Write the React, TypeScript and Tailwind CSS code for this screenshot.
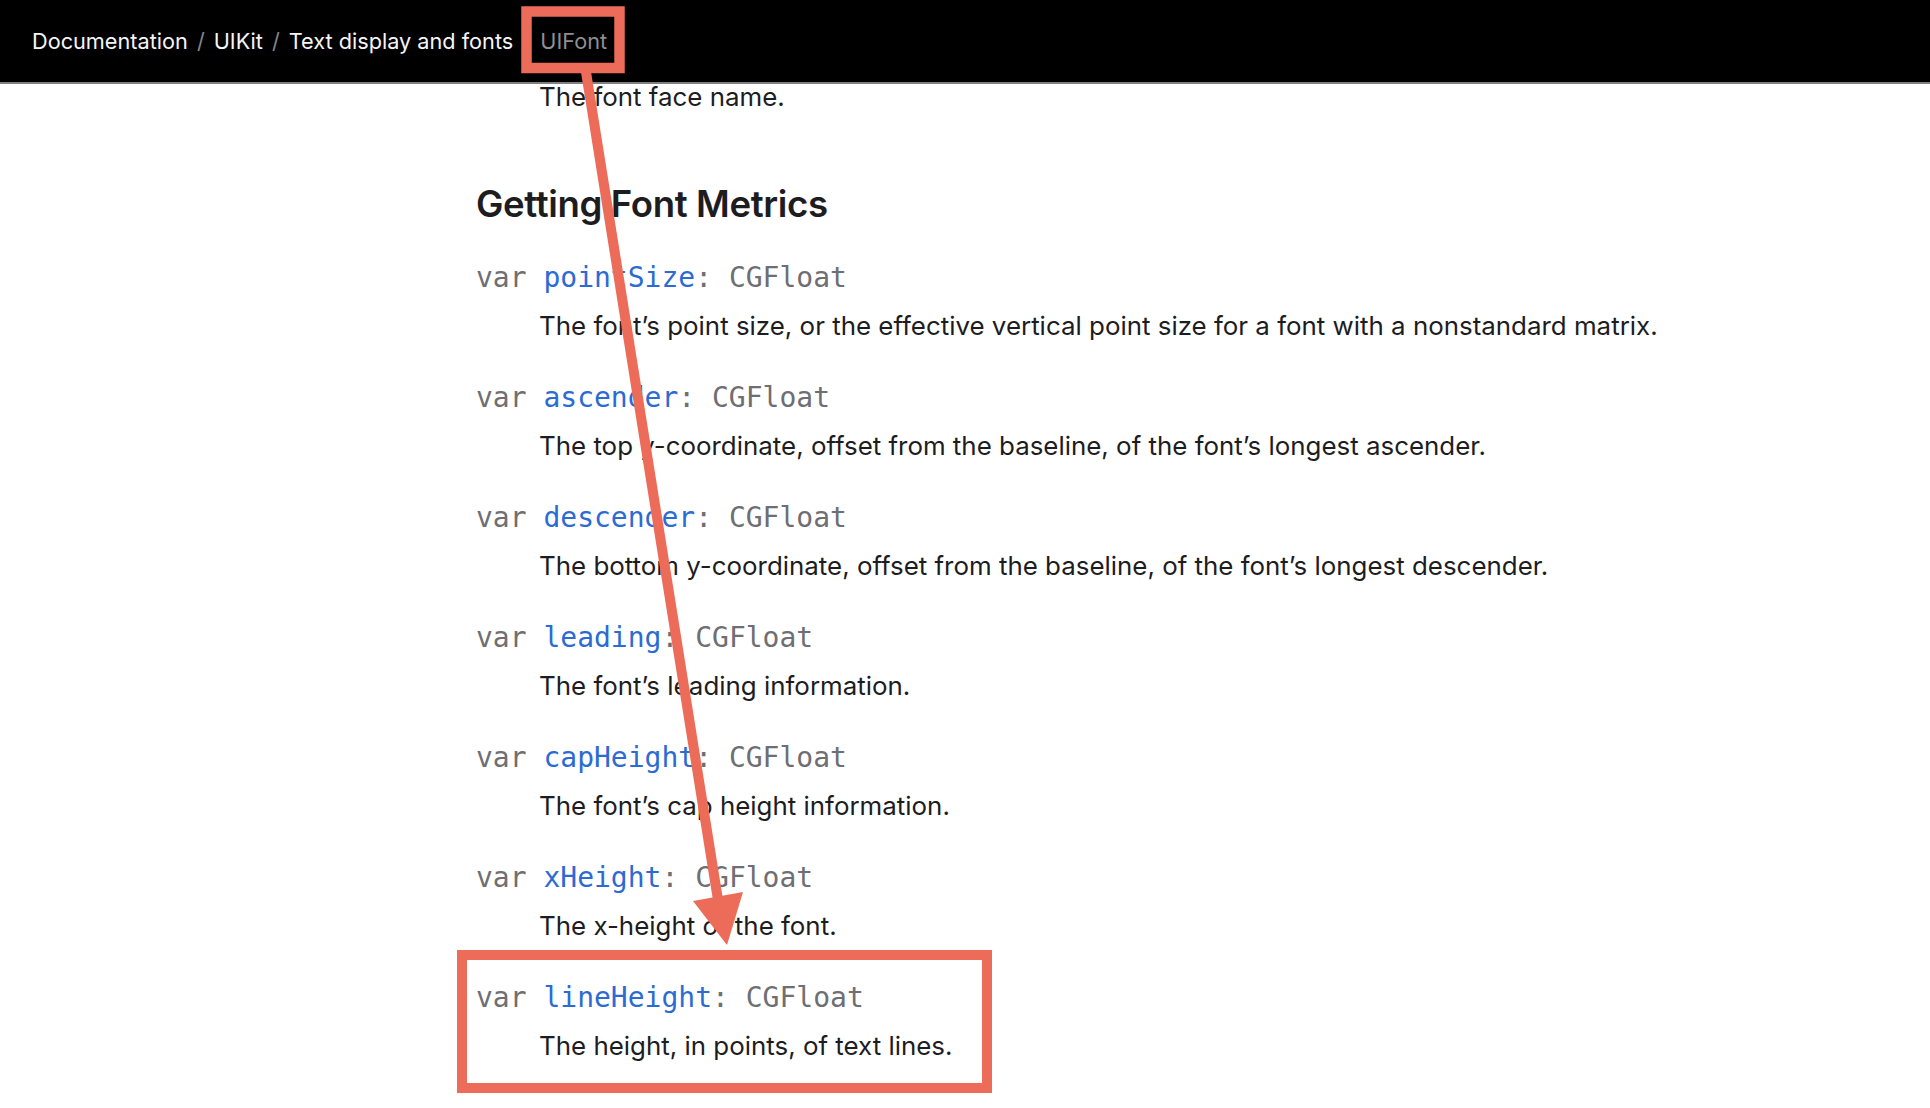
type Metric = {
  name: string;
  type: string;
  summary: string;
};

const metrics: Metric[] = [
  {
    name: "pointSize",
    type: "CGFloat",
    summary:
      "The font’s point size, or the effective vertical point size for a font with a nonstandard matrix.",
  },
  {
    name: "ascender",
    type: "CGFloat",
    summary:
      "The top y-coordinate, offset from the baseline, of the font’s longest ascender.",
  },
  {
    name: "descender",
    type: "CGFloat",
    summary:
      "The bottom y-coordinate, offset from the baseline, of the font’s longest descender.",
  },
  { name: "leading", type: "CGFloat", summary: "The font’s leading information." },
  { name: "capHeight", type: "CGFloat", summary: "The font’s cap height information." },
  { name: "xHeight", type: "CGFloat", summary: "The x-height of the font." },
  { name: "lineHeight", type: "CGFloat", summary: "The height, in points, of text lines." },
];

const crumbs = ["Documentation", "UIKit", "Text display and fonts"];

function Breadcrumbs(): JSX.Element {
  return (
    <nav className="h-[84px] bg-black border-b-2 border-[#808080] flex items-center pl-[32px] pt-[1px] font-['Inter',sans-serif] text-[21.7px]">
      {crumbs.map((c, i) => (
        <span key={c} className="inline-flex items-center">
          {i > 0 && <span className="text-[#86868b] mx-[9px]">/</span>}
          <span className="text-[#f5f5f7]">{c}</span>
        </span>
      ))}
      {/* the last separator sits under the highlight box */}
      <span className="text-[#8e8e93] ml-[27px]">UIFont</span>
    </nav>
  );
}

function MetricRow({ m }: { m: Metric }): JSX.Element {
  return (
    <div className="flex flex-col">
      <div className="h-[48px] leading-[48px] font-['DejaVu_Sans_Mono',monospace] text-[28px] text-[#6e6e73] whitespace-pre">
        <span>var </span>
        <span className="text-[#2c6bd2]">{m.name}</span>
        <span>: {m.type}</span>
      </div>
      <div className="h-[48px] leading-[48px] pl-[63px] text-[25.9px] text-[#1d1d1f]">
        {m.summary}
      </div>
    </div>
  );
}

function Annotations(): JSX.Element {
  const red = "#ec6b59";
  return (
    <svg
      className="absolute left-0 top-0 pointer-events-none"
      width={1930}
      height={1108}
      viewBox="0 0 1930 1108"
    >
      <rect x="526.5" y="11.5" width="93" height="56.5" fill="none" stroke={red} strokeWidth="10.5" />
      <line x1="586" y1="72" x2="718" y2="900" stroke={red} strokeWidth="10" />
      <polygon points="693,901 743,892 727,945" fill={red} />
      <rect x="462" y="955" width="525" height="133" fill="none" stroke={red} strokeWidth="10" />
    </svg>
  );
}

export default function App(): JSX.Element {
  return (
    <div className="relative w-[1930px] h-[1108px] overflow-hidden bg-white font-['Inter',sans-serif]">
      <Breadcrumbs />
      <main className="pl-[476px] pt-[1px]">
        <p className="pl-[63px] leading-[24px] text-[25.9px] text-[#1d1d1f]">
          The font face name.
        </p>
        <h2 className="mt-[70px] leading-[50px] text-[36.6px] font-semibold text-[#1d1d1f] tracking-[-0.01em]">
          Getting Font Metrics
        </h2>
        <div className="mt-[25px] flex flex-col gap-[24px]">
          {metrics.map((m) => (
            <MetricRow key={m.name} m={m} />
          ))}
        </div>
      </main>
      <Annotations />
    </div>
  );
}
